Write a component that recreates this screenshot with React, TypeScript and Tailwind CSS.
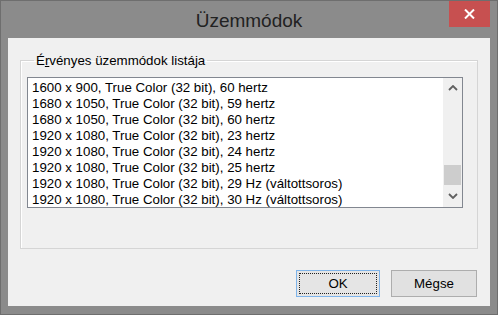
import React from 'react';

const modes = [
  '1600 x 900, True Color (32 bit), 60 hertz',
  '1680 x 1050, True Color (32 bit), 59 hertz',
  '1680 x 1050, True Color (32 bit), 60 hertz',
  '1920 x 1080, True Color (32 bit), 23 hertz',
  '1920 x 1080, True Color (32 bit), 24 hertz',
  '1920 x 1080, True Color (32 bit), 25 hertz',
  '1920 x 1080, True Color (32 bit), 29 Hz (váltottsoros)',
  '1920 x 1080, True Color (32 bit), 30 Hz (váltottsoros)',
];

function Chevron({ up }: { up?: boolean }) {
  return (
    <svg width="10" height="6" viewBox="0 0 10 6" className="block">
      <path
        d={up ? 'M1 5 L5 1 L9 5' : 'M1 1 L5 5 L9 1'}
        fill="none"
        stroke="#606060"
        strokeWidth="1.8"
      />
    </svg>
  );
}

function ScrollBar() {
  return (
    <div className="w-[19px] h-full flex flex-col bg-[#f0f0f0]">
      <div className="h-[20px] flex items-center justify-center">
        <Chevron up />
      </div>
      <div className="flex-1 flex flex-col justify-end">
        <div className="h-[20px] mx-[1px] bg-[#cdcdcd]" />
      </div>
      <div className="h-[22px] flex items-center justify-center">
        <Chevron />
      </div>
    </div>
  );
}

export default function App() {
  return (
    <div
      className="w-[498px] h-[315px] bg-[#8b8b8b] border border-[#6e6e6e] flex flex-col overflow-hidden text-[#000]"
      style={{ fontFamily: '"Liberation Sans", Arial, sans-serif' }}
    >
      {/* title bar */}
      <div className="h-[37px] relative flex items-center justify-center">
        <span className="text-[19px] text-[#222] leading-none mt-[1px]">Üzemmódok</span>
        <button className="absolute top-0 right-[7px] w-[41px] h-[26px] bg-[#c75050] flex items-center justify-center">
          <svg width="11" height="10" viewBox="0 0 11 10">
            <path d="M1 0.5 L10 9.5 M10 0.5 L1 9.5" stroke="#fff" strokeWidth="2" />
          </svg>
        </button>
      </div>

      {/* client area */}
      <div className="mx-[7px] mb-[8px] flex-1 bg-[#f0f0f0] flex flex-col px-[12px] pt-[15px]">
        <fieldset className="border border-[#d5d5d5] shadow-[inset_1px_1px_0_#fff] h-[196px] pl-[6px] pr-[14px]">
          <legend className="ml-[7px] px-[2px] text-[13.3px] leading-[15px]">
            É<span className="underline">r</span>vényes üzemmódok listája
          </legend>
          <div className="mt-[9px] h-[131px] border border-[#828790] bg-white flex">
            <div className="flex-1 pt-[2px] pl-[4px]">
              {modes.map((m) => (
                <div key={m} className="h-[16px] leading-[16px] text-[13.3px] whitespace-nowrap">
                  {m}
                </div>
              ))}
            </div>
            <ScrollBar />
          </div>
        </fieldset>

        <div className="flex justify-end gap-[11px] mt-[21px] pr-[1px]">
          <button className="w-[84px] h-[27px] border border-[#7eb4ea] bg-[#e5e5e5] p-[2px]">
            <div className="w-full h-full border border-dotted border-[#222] flex items-center justify-center text-[13.3px]">
              OK
            </div>
          </button>
          <button className="w-[86px] h-[27px] border border-[#adadad] bg-[#e1e1e1] flex items-center justify-center text-[13.3px]">
            Mégse
          </button>
        </div>
      </div>
    </div>
  );
}
